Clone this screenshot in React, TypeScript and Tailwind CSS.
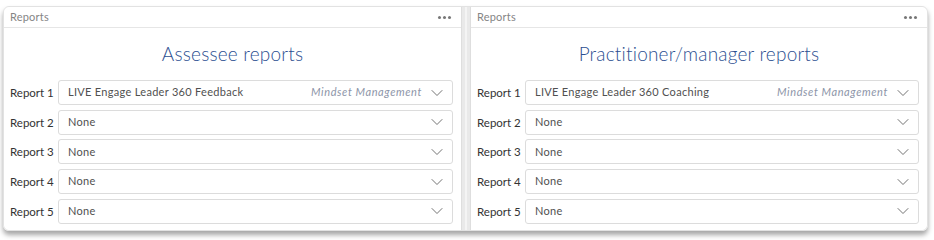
import { ChevronDown } from 'lucide-react';

type Row = { label: string; value: string; vendor?: string };

const assessee: Row[] = [
  { label: 'Report 1', value: 'LIVE Engage Leader 360 Feedback', vendor: 'Mindset Management' },
  { label: 'Report 2', value: 'None' },
  { label: 'Report 3', value: 'None' },
  { label: 'Report 4', value: 'None' },
  { label: 'Report 5', value: 'None' },
];

const practitioner: Row[] = [
  { label: 'Report 1', value: 'LIVE Engage Leader 360 Coaching', vendor: 'Mindset Management' },
  { label: 'Report 2', value: 'None' },
  { label: 'Report 3', value: 'None' },
  { label: 'Report 4', value: 'None' },
  { label: 'Report 5', value: 'None' },
];

function Panel({ title, rows, className }: { title: string; rows: Row[]; className?: string }) {
  return (
    <div className={'flex flex-col bg-white ' + (className ?? '')}>
      <div className="h-[21px] flex items-center justify-between pl-[6px] pr-[10px] border-b border-[#e6e6e6]">
        <span className="text-[11px] text-[#858585] tracking-[0.2px]">Reports</span>
        <span className="flex gap-[2px]">
          <i className="w-[3px] h-[3px] rounded-full bg-[#777]" />
          <i className="w-[3px] h-[3px] rounded-full bg-[#777]" />
          <i className="w-[3px] h-[3px] rounded-full bg-[#777]" />
        </span>
      </div>
      <div className="h-[52px] flex items-center justify-center">
        <h2 className="text-[19px] font-light text-[#2c4f91] tracking-[0.2px]">{title}</h2>
      </div>
      <div className="flex flex-col gap-[4.7px] pl-[6px] pr-[8px] pb-[6px]">
        {rows.map(r => (
          <div key={r.label} className="flex items-center">
            <span className="w-[48px] shrink-0 text-[11.5px] text-[#333]">{r.label}</span>
            <div className="flex-1 h-[25px] flex items-center border border-[#dcdcdc] rounded-[3px] pl-[9px] pr-[5px]">
              <span className="flex-1 text-[11px] text-[#505050] tracking-[0.3px]">{r.value}</span>
              {r.vendor && (
                <span className="text-[11px] italic text-[#8d95a8] tracking-[0.6px] mr-[5px]">{r.vendor}</span>
              )}
              <ChevronDown size={20} strokeWidth={1.1} className="text-[#666]" />
            </div>
          </div>
        ))}
      </div>
    </div>
  );
}

export default function App() {
  return (
    <div className="w-[934px] h-[240px] bg-white pt-[6px] pl-[3px] font-['Lato',sans-serif]">
      <div className="w-[925px] flex rounded-[6px] border border-[#e2e2e2] shadow-[0_4px_5px_rgba(0,0,0,0.35)] overflow-hidden">
        <Panel title="Assessee reports" rows={assessee} className="w-[457px] rounded-l-[6px]" />
        <div className="w-[10px] bg-[#e9e9e9] flex justify-center border-x border-[#dedede]">
          <div className="w-[2px] bg-[#f4f4f4]" />
        </div>
        <Panel title="Practitioner/manager reports" rows={practitioner} className="flex-1 rounded-r-[6px]" />
      </div>
    </div>
  );
}
